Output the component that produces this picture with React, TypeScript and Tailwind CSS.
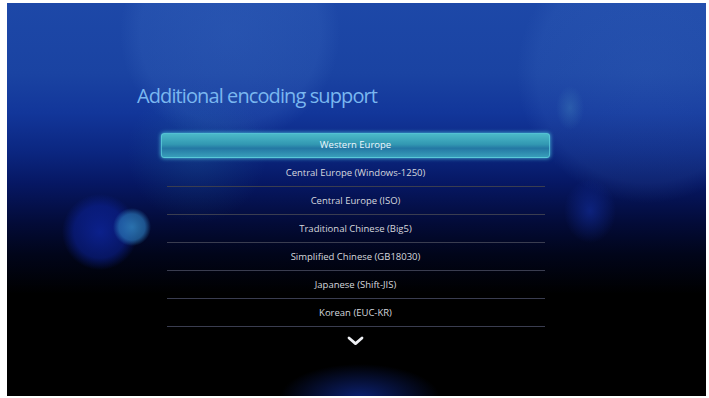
import React from "react";

const encodings = [
  "Central Europe (Windows-1250)",
  "Central Europe (ISO)",
  "Traditional Chinese (Big5)",
  "Simplified Chinese (GB18030)",
  "Japanese (Shift-JIS)",
  "Korean (EUC-KR)",
];

export default function App() {
  return (
    <div className="w-[709px] h-[398px] bg-white pl-[7px] pt-[3px] pr-[3px] pb-[2px] font-['Open_Sans',sans-serif]">
      {/* screen with bokeh lights baked into the background */}
      <div className="w-full h-full overflow-hidden bg-[radial-gradient(circle_at_125px_224px,rgba(48,130,190,0.85)_0,rgba(40,115,180,0.7)_13px,rgba(20,60,160,0)_19px),radial-gradient(circle_at_93px_229px,rgba(14,40,170,0.75)_0,rgba(12,36,160,0.55)_26px,rgba(10,30,140,0)_38px),radial-gradient(ellipse_14px_22px_at_563px_105px,rgba(70,140,190,0.35),rgba(70,140,190,0)),radial-gradient(ellipse_26px_32px_at_583px_208px,rgba(20,50,170,0.55),rgba(20,50,170,0)),radial-gradient(ellipse_80px_34px_at_353px_395px,rgba(20,55,190,0.6),rgba(20,55,190,0)),radial-gradient(circle_at_190px_150px,rgba(40,120,170,0.22)_0,rgba(40,120,170,0)_70px),radial-gradient(circle_at_223px_30px,rgba(80,130,210,0.22)_0,rgba(80,130,210,0.15)_90px,rgba(80,130,210,0)_110px),radial-gradient(circle_at_640px_70px,rgba(80,130,210,0.18)_0,rgba(80,130,210,0.12)_110px,rgba(80,130,210,0)_130px),linear-gradient(180deg,#1d48a8_0%,#1a43a2_18%,#12369a_28%,#0b2680_38%,#061763_46%,#030b38_56%,#01051a_64%,#000_74%)] flex flex-col">
        <h1 className="pl-[130px] pt-[80px] text-[20px] leading-[26px] tracking-[-0.9px] text-[#7ab7f0]">
          Additional encoding support
        </h1>

        <div className="ml-[154px] mt-[24px] w-[389px] flex flex-col items-center">
          <div className="w-full h-[25px] rounded-[3px] border border-[#5fd0e0]/70 bg-[linear-gradient(180deg,#4bb9c8_0%,#3298b2_45%,#2478a4_62%,#389eba_100%)] shadow-[0_0_4px_#4fc8e0] flex items-center justify-center text-[9.5px] text-[#eef8ff]">
            Western Europe
          </div>
          <div className="w-[378px] pt-[1px] flex flex-col">
            {encodings.map((e) => (
              <div
                key={e}
                className="h-[28px] pt-[2px] border-b border-[#3a3d50] flex items-center justify-center text-[9.5px] text-[#d6d8de]"
              >
                {e}
              </div>
            ))}
          </div>
          <svg className="mt-[9px]" width="17" height="10" viewBox="0 0 17 10">
            <path d="M2 2 L8.5 7.6 L15 2" fill="none" stroke="#eef0f4" strokeWidth="2.8" strokeLinecap="round" strokeLinejoin="round" />
          </svg>
        </div>
      </div>
    </div>
  );
}
